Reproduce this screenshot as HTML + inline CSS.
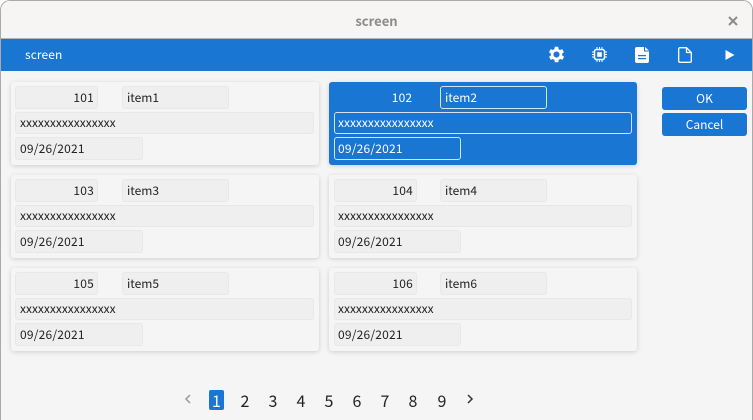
<!DOCTYPE html>
<html><head><meta charset="utf-8">
<style>
html,body{margin:0;padding:0;width:753px;height:420px;overflow:hidden;background:#fff}
*{box-sizing:border-box}
body{font-family:"Noto Sans CJK JP","Liberation Sans",sans-serif;font-size:12px;color:#222}
#win{position:absolute;left:0;top:0;width:753px;height:420px;background:#f5f5f5;border:1px solid #aaa;border-bottom:0;border-radius:10px 10px 0 0;overflow:hidden}
.a{position:absolute}
#tb{left:-1px;top:0;width:753px;height:38px;background:#f6f5f4;border-bottom:1px solid #b5b3b0;text-align:center;line-height:39px;font-weight:700;font-size:13px;color:#8b8b8b}
#bar{left:-1px;top:38px;width:753px;height:32px;background:#1976d2;color:#fff;line-height:31px;letter-spacing:.1px}
.card{position:absolute;width:308px;height:83px;background:#f5f5f5;border-radius:3px;box-shadow:0 1px 5px rgba(0,0,0,.16)}
.f{position:absolute;background:#efefef;border:1px solid #e8e8e8;border-radius:3px;height:23px;line-height:21px;padding-left:4px;white-space:nowrap}
.id{left:4px;top:4px;width:83px;text-align:right;padding:0 3px 0 0;letter-spacing:.2px}
.it{left:111px;top:4px;width:107px}
.lg{left:4px;top:30px;width:299px;height:22px;line-height:20px}
.dt{left:4px;top:55px;width:128px;letter-spacing:.2px}
.c2 .id{left:5px}
.c2 .lg{left:5px;width:298px;padding-left:3px}
.c2 .dt{left:5px;width:127px;padding-left:3px}
.sel{background:#1976d2;box-shadow:0 1px 5px rgba(0,0,0,.16)}
.sel .f{background:#1976d2;border-color:#d5e4f4;color:#fff}
.sel .id{border-color:#1976d2;text-align:center;padding:0 0 0 53px;width:83px}
.btn{position:absolute;left:662px;width:85px;height:23px;background:#1976d2;color:#fff;border-radius:3px;text-align:center;line-height:23px}
.pg{position:absolute;top:389px;font-size:16px;line-height:22px;width:16px;text-align:center;color:#222}
</style></head><body>
<div id="win">
<div id="tb" class="a">screen</div>
<svg class="a" style="left:726px;top:14px" width="12" height="12" viewBox="0 0 12 12"><path d="M2 2L10 10M10 2L2 10" stroke="#8a8a8a" stroke-width="2"/></svg>
<div id="bar" class="a"><span class="a" style="left:25px;top:0">screen</span>
<svg class="a" style="left:546px;top:5px" width="21" height="21" viewBox="0 0 24 24"><path fill="#fff" d="M19.400 13a7.500 7.500 0 0 0 0-2l2.100-1.600-2-3.500-2.500 1a7.500 7.500 0 0 0-1.700-1L15 3.200h-4l-.4 2.700a7.500 7.500 0 0 0-1.700 1l-2.500-1-2 3.500L6.600 11a7.500 7.500 0 0 0 0 2l-2.100 1.600 2 3.500 2.500-1a7.500 7.500 0 0 0 1.700 1l.4 2.700h4l.4-2.700a7.500 7.500 0 0 0 1.700-1l2.500 1 2-3.500zM13 15.500a3.500 3.500 0 1 1 0-7 3.500 3.500 0 0 1 0 7z" transform="translate(-1 0)"/></svg>
<svg class="a" style="left:592px;top:8px" width="15" height="15" viewBox="0 0 15 15"><rect x="2.500" y="2.500" width="10" height="10" rx="2" fill="none" stroke="#fff" stroke-width="1.500"/><rect x="5.200" y="5.200" width="4.600" height="4.600" fill="#fff"/><path d="M5 0v2M7.500 0v2M10 0v2M5 13v2M7.500 13v2M10 13v2M0 5h2M0 7.500h2M0 10h2M13 5h2M13 7.500h2M13 10h2" stroke="#fff" stroke-width="1"/></svg>
<svg class="a" style="left:635px;top:8px" width="14" height="16" viewBox="0 0 14 16"><path fill="#fff" d="M2 0h7v4.500h5V14a2 2 0 0 1-2 2H2a2 2 0 0 1-2-2V2a2 2 0 0 1 2-2zM10 0l4 3.500h-4zM3 8v1.300h8V8zM3 11v1.300h8V11z" fill-rule="evenodd"/></svg>
<svg class="a" style="left:678px;top:8px" width="14" height="16" viewBox="0 0 14 16"><path fill="none" stroke="#fff" stroke-width="1.300" d="M2 .7h6.500L13.300 5.500V14a1.300 1.300 0 0 1-1.300 1.300H2A1.300 1.300 0 0 1 .7 14V2A1.300 1.300 0 0 1 2 .7zM8.500 .7V5.500h4.800"/></svg>
<svg class="a" style="left:725px;top:10px" width="10" height="12" viewBox="0 0 10 12"><path fill="#fff" d="M0.500 1L9.500 6L0.500 11z"/></svg>
</div>
</div>

<div class="card" style="left:11px;top:82px"><div class="f id">101</div><div class="f it">item1</div><div class="f lg">xxxxxxxxxxxxxxxx</div><div class="f dt">09/26/2021</div></div>
<div class="card sel c2" style="left:329px;top:82px"><div class="f id">102</div><div class="f it">item2</div><div class="f lg">xxxxxxxxxxxxxxxx</div><div class="f dt">09/26/2021</div></div>
<div class="card" style="left:11px;top:175px"><div class="f id">103</div><div class="f it">item3</div><div class="f lg">xxxxxxxxxxxxxxxx</div><div class="f dt">09/26/2021</div></div>
<div class="card c2" style="left:329px;top:175px"><div class="f id">104</div><div class="f it">item4</div><div class="f lg">xxxxxxxxxxxxxxxx</div><div class="f dt">09/26/2021</div></div>
<div class="card" style="left:11px;top:268px"><div class="f id">105</div><div class="f it">item5</div><div class="f lg">xxxxxxxxxxxxxxxx</div><div class="f dt">09/26/2021</div></div>
<div class="card c2" style="left:329px;top:268px"><div class="f id">106</div><div class="f it">item6</div><div class="f lg">xxxxxxxxxxxxxxxx</div><div class="f dt">09/26/2021</div></div>

<div class="btn" style="top:87px">OK</div>
<div class="btn" style="top:113px">Cancel</div>

<svg class="a" style="left:184px;top:394px" width="8" height="10" viewBox="0 0 8 10"><path d="M6 1L2 5L6 9" fill="none" stroke="#999" stroke-width="1.500"/></svg>
<div class="pg" style="left:209px;top:390px;width:15px;height:20px;background:#1976d2;color:#fff;border-radius:2px;line-height:20px">1</div>
<div class="pg" style="left:237px">2</div>
<div class="pg" style="left:265px">3</div>
<div class="pg" style="left:293px">4</div>
<div class="pg" style="left:321px">5</div>
<div class="pg" style="left:349px">6</div>
<div class="pg" style="left:377px">7</div>
<div class="pg" style="left:405px">8</div>
<div class="pg" style="left:434px">9</div>
<svg class="a" style="left:466px;top:394px" width="8" height="10" viewBox="0 0 8 10"><path d="M2 1L6 5L2 9" fill="none" stroke="#333" stroke-width="1.500"/></svg>
</body></html>
